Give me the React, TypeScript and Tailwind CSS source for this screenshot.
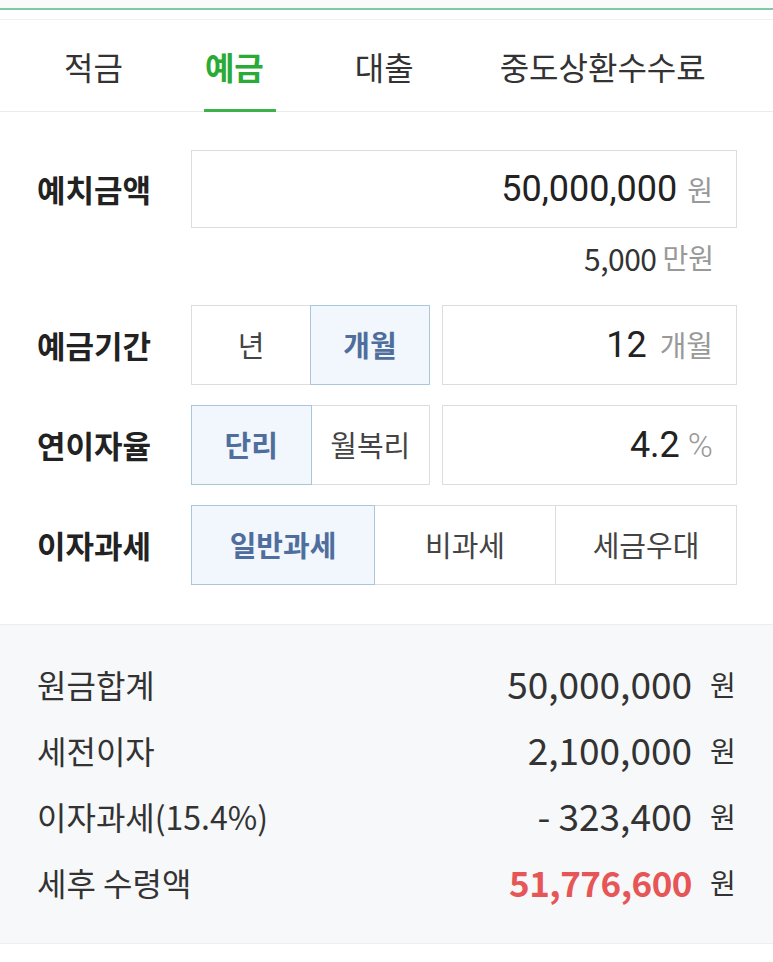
import React from "react";

const KR = "font-['Noto_Sans_CJK_KR',sans-serif]";
const NUM = "font-['Roboto','Noto_Sans_CJK_KR',sans-serif]";

function Seg({ label, active, className = "" }: { label: string; active?: boolean; className?: string }) {
  return (
    <div
      className={
        "flex items-center justify-center border text-[29px] " +
        (active
          ? "bg-[#f1f7fc] border-[#a9c7da] text-[#4f6e9d] font-bold z-10 "
          : "bg-white border-[#dddddd] text-[#444444] ") +
        className
      }
    >
      {label}
    </div>
  );
}

function Row({ label, value, unit, red }: { label: string; value: string; unit: string; red?: boolean }) {
  return (
    <div className="flex h-[66px] items-center justify-between">
      <span className="text-[32px] text-[#333333]">{label}</span>
      <span className="flex items-center">
        <span
          className={
            red ? "text-[35px] tracking-[-0.5px] text-[#e65656] font-bold" : "text-[37px] text-[#333333]"
          }
        >
          {value}
        </span>
        <span className="ml-[18px] w-[26px] text-[28px] text-[#333333]">{unit}</span>
      </span>
    </div>
  );
}

export default function App() {
  return (
    <div className={"w-[773px] h-[962px] bg-white overflow-hidden " + KR}>
      {/* top green line */}
      <div className="h-[8px] bg-[#fafcfb]" />
      <div className="h-[2px] bg-[#7fcaa9]" />
      <div className="h-[9px] bg-white" />
      {/* tabs */}
      <div className="border-t border-[#f0f0f0] border-b border-b-[#ebebeb] h-[93px] flex items-center pl-[64px] text-[32px] text-[#333333]">
        <span>적금</span>
        <span className="relative ml-[82px] font-bold text-[#2aab37]">
          예금
          <span className="absolute -left-[1px] w-[72px] -bottom-[22px] h-[3px] bg-[#3db24a]" />
        </span>
        <span className="ml-[91px]">대출</span>
        <span className="ml-[86px]">중도상환수수료</span>
      </div>

      {/* form */}
      <div className="pl-[37px] pr-[36px] pt-[38px] pb-[39px] border-b border-[#ededed]">
        <div className="flex">
          <div className="w-[154px] flex items-center text-[31px] font-bold text-[#222222]">예치금액</div>
          <div className="flex-1 h-[78px] border border-[#dddddd] flex items-center justify-end pr-[23px]">
            <span className={NUM + " text-[36px] text-[#222222]"}>50,000,000</span>
            <span className="ml-[10px] text-[28px] text-[#999999]">원</span>
          </div>
        </div>
        <div className="h-[77px] flex justify-end items-start pt-[8px] pr-[23px]">
          <span className="text-[30px] text-[#333333] tracking-[-0.5px]">5,000</span>
          <span className="ml-[6px] text-[28px] text-[#999999]">만원</span>
        </div>

        <div className="flex h-[80px]">
          <div className="w-[154px] flex items-center text-[31px] font-bold text-[#222222]">예금기간</div>
          <div className="flex w-[239px]">
            <Seg label="년" className="w-[120px]" />
            <Seg label="개월" active className="w-[120px] -ml-[1px]" />
          </div>
          <div className="ml-[12px] flex-1 border border-[#dddddd] flex items-center justify-end pr-[23px]">
            <span className={NUM + " text-[36px] text-[#222222]"}>12</span>
            <span className="ml-[13px] text-[29px] text-[#999999]">개월</span>
          </div>
        </div>

        <div className="flex h-[80px] mt-[20px]">
          <div className="w-[154px] flex items-center text-[31px] font-bold text-[#222222]">연이자율</div>
          <div className="flex w-[239px]">
            <Seg label="단리" active className="w-[121px]" />
            <Seg label="월복리" className="w-[120px] -ml-[1px]" />
          </div>
          <div className="ml-[12px] flex-1 border border-[#dddddd] flex items-center justify-end pr-[23px]">
            <span className={NUM + " text-[36px] text-[#222222]"}>4.2</span>
            <span className={NUM + " ml-[8px] text-[34px] font-light text-[#999999]"}>%</span>
          </div>
        </div>

        <div className="flex h-[80px] mt-[20px]">
          <div className="w-[154px] flex items-center text-[31px] font-bold text-[#222222]">이자과세</div>
          <div className="flex flex-1">
            <Seg label="일반과세" active className="w-[184px]" />
            <Seg label="비과세" className="flex-1 -ml-[1px]" />
            <Seg label="세금우대" className="flex-1 -ml-[1px]" />
          </div>
        </div>
      </div>

      {/* results */}
      <div className="bg-[#f7f8fa] pl-[37px] pr-[37px] pt-[26px] pb-[28px] border-b border-[#eeeeee]">
        <Row label="원금합계" value="50,000,000" unit="원" />
        <Row label="세전이자" value="2,100,000" unit="원" />
        <Row label="이자과세(15.4%)" value="- 323,400" unit="원" />
        <Row label="세후 수령액" value="51,776,600" unit="원" red />
      </div>
    </div>
  );
}
